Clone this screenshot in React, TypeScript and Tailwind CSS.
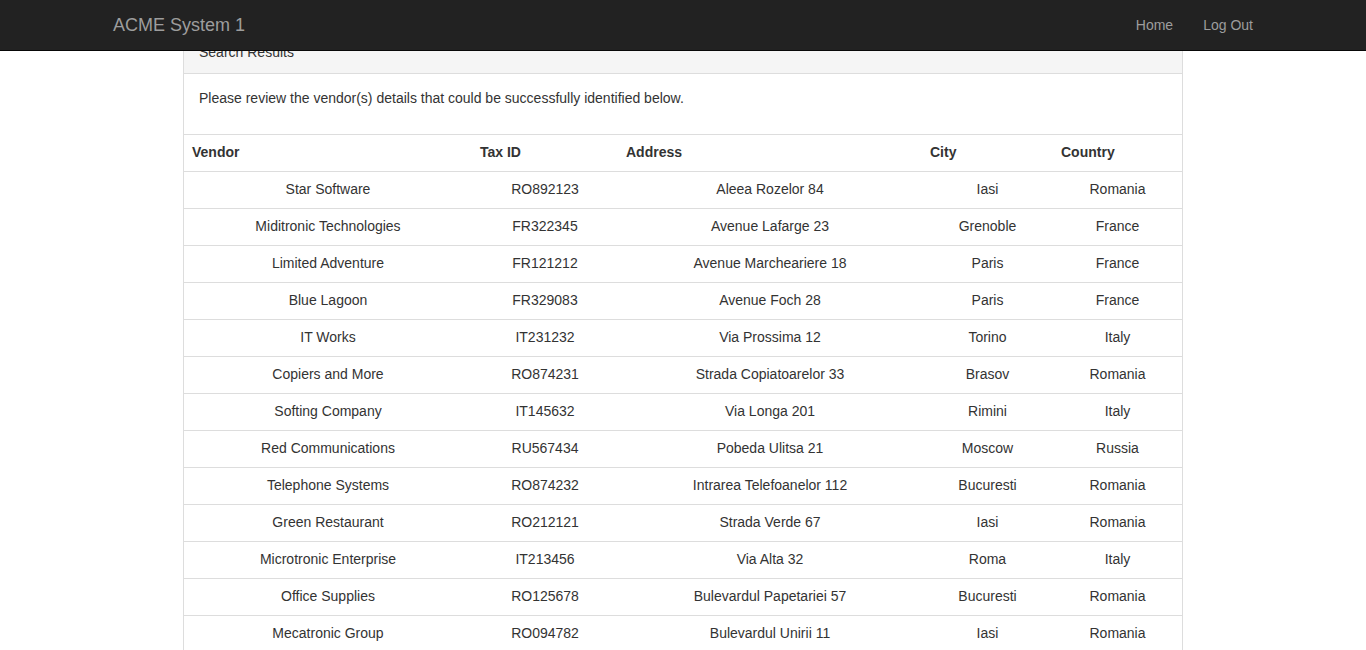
import React from "react";

const rows: [string, string, string, string, string][] = [
  ["Star Software", "RO892123", "Aleea Rozelor 84", "Iasi", "Romania"],
  ["Miditronic Technologies", "FR322345", "Avenue Lafarge 23", "Grenoble", "France"],
  ["Limited Adventure", "FR121212", "Avenue Marcheariere 18", "Paris", "France"],
  ["Blue Lagoon", "FR329083", "Avenue Foch 28", "Paris", "France"],
  ["IT Works", "IT231232", "Via Prossima 12", "Torino", "Italy"],
  ["Copiers and More", "RO874231", "Strada Copiatoarelor 33", "Brasov", "Romania"],
  ["Softing Company", "IT145632", "Via Longa 201", "Rimini", "Italy"],
  ["Red Communications", "RU567434", "Pobeda Ulitsa 21", "Moscow", "Russia"],
  ["Telephone Systems", "RO874232", "Intrarea Telefoanelor 112", "Bucuresti", "Romania"],
  ["Green Restaurant", "RO212121", "Strada Verde 67", "Iasi", "Romania"],
  ["Microtronic Enterprise", "IT213456", "Via Alta 32", "Roma", "Italy"],
  ["Office Supplies", "RO125678", "Bulevardul Papetariei 57", "Bucuresti", "Romania"],
  ["Mecatronic Group", "RO094782", "Bulevardul Unirii 11", "Iasi", "Romania"],
];

export default function App() {
  return (
    <div
      className="min-h-screen bg-white text-[14px] leading-[20px] text-[#333]"
      style={{ fontFamily: '"Liberation Sans", Arial, Helvetica, sans-serif' }}
    >
      <nav className="fixed top-0 left-0 right-0 z-10 h-[51px] bg-[#222] border-b border-[#080808]">
        <div className="mx-auto w-[1170px] px-[15px] flex items-center justify-between h-[50px]">
          <span className="text-[18px] leading-[20px] text-[#9d9d9d]">ACME System 1</span>
          <div className="flex -mr-[15px]">
            <span className="px-[15px] py-[15px] text-[#9d9d9d]">Home</span>
            <span className="px-[15px] py-[15px] text-[#9d9d9d]">Log Out</span>
          </div>
        </div>
      </nav>

      <div className="pt-[32px]">
        <div className="mx-auto w-[1000px] border border-[#ddd] bg-white">
          <div className="bg-[#f5f5f5] border-b border-[#ddd] px-[15px] pt-[9px] pb-[11px]">Search Results</div>
          <div className="px-[15px] pt-[14px] pb-[16px]">
            <p className="mb-[10px]">Please review the vendor(s) details that could be successfully identified below.</p>
          </div>
          <table className="w-full table-fixed border-collapse">
            <colgroup>
              <col className="w-[288px]" />
              <col className="w-[146px]" />
              <col className="w-[304px]" />
              <col className="w-[131px]" />
              <col className="w-[129px]" />
            </colgroup>
            <thead>
              <tr className="border-t border-[#ddd]">
                <th className="px-[8px] pt-[7px] pb-[9px] text-left font-bold">Vendor</th>
                <th className="px-[8px] pt-[7px] pb-[9px] text-left font-bold">Tax ID</th>
                <th className="px-[8px] pt-[7px] pb-[9px] text-left font-bold">Address</th>
                <th className="px-[8px] pt-[7px] pb-[9px] text-left font-bold">City</th>
                <th className="px-[8px] pt-[7px] pb-[9px] text-left font-bold">Country</th>
              </tr>
            </thead>
            <tbody>
              {rows.map((r) => (
                <tr key={r[0]} className="border-t border-[#ddd]">
                  {r.map((c, i) => (
                    <td key={i} className="px-[8px] pt-[7px] pb-[9px] text-center">
                      {c}
                    </td>
                  ))}
                </tr>
              ))}
            </tbody>
          </table>
        </div>
      </div>
    </div>
  );
}
